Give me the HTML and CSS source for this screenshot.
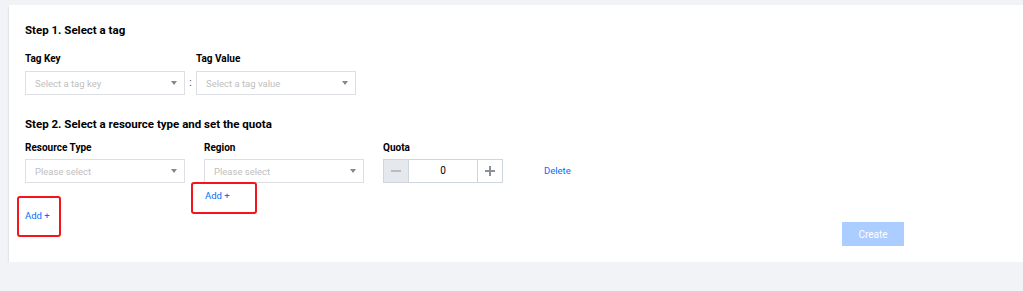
FILE: index.html
```html
<!DOCTYPE html>
<html lang="en">
<head>
    <meta charset="UTF-8">
    <title>Tag quota</title>
    <link rel="stylesheet" href="styles.css">
</head>
<body>
    <div class="card">
        <h3 class="step-title">Step 1. Select a tag</h3>
        <div class="row">
            <div class="field">
                <div class="label">Tag Key</div>
                <div class="select"><span>Select a tag key</span><i class="arrow"></i></div>
            </div>
            <div class="colon">:</div>
            <div class="field">
                <div class="label">Tag Value</div>
                <div class="select"><span>Select a tag value</span><i class="arrow"></i></div>
            </div>
        </div>

        <h3 class="step-title second">Step 2. Select a resource type and set the quota</h3>
        <div class="row quota-row">
            <div class="field">
                <div class="label">Resource Type</div>
                <div class="select"><span>Please select</span><i class="arrow"></i></div>
            </div>
            <div class="field">
                <div class="label">Region</div>
                <div class="select"><span>Please select</span><i class="arrow"></i></div>
                <a class="link add-region">Add +</a>
            </div>
            <div class="field">
                <div class="label">Quota</div>
                <div class="stepper">
                    <span class="step-btn disabled"><i class="minus"></i></span>
                    <span class="step-value">0</span>
                    <span class="step-btn"><i class="plus"></i></span>
                </div>
            </div>
            <a class="link delete">Delete</a>
        </div>

        <div class="actions">
            <a class="link add-main">Add +</a>
            <button class="btn-create" disabled>Create</button>
        </div>

        <div class="mark mark-region"></div>
        <div class="mark mark-main"></div>
    </div>
</body>
</html>
```

FILE: styles.css
```css
body {
    margin: 0;
    background: #f2f3f7;
    font-family: Roboto, 'Liberation Sans', Arial, sans-serif;
    font-size: 10px;
    color: #000;
}
.card {
    position: relative;
    margin: 5px 0 0 9px;
    height: 226px;
    padding: 16px 16px 15px;
    background: #fff;
    box-shadow: 0 2px 2px rgba(0,0,0,0.18);
}
.step-title {
    margin: 0;
    font-size: 11.5px;
    font-weight: 700;
    line-height: 18px;
}
.step-title.second {
    margin-top: 20px;
}
.row {
    display: flex;
    align-items: flex-start;
    margin-top: 13px;
}
.quota-row {
    margin-top: 8px;
}
.field {
    width: 160px;
}
.label {
    font-size: 10px;
    font-weight: 700;
    line-height: 14px;
    margin-bottom: 5px;
}
.quota-row .label {
    margin-bottom: 4px;
}
.select {
    position: relative;
    height: 24px;
    box-sizing: border-box;
    border: 1px solid #dcdfe4;
    padding: 0 9px;
    display: flex;
    align-items: center;
    color: #c0c0c0;
    font-size: 9.5px;
}
.select span {
    flex: 1;
}
.arrow {
    width: 0;
    height: 0;
    border-left: 3px solid transparent;
    border-right: 3px solid transparent;
    border-top: 4px solid #888;
    margin-right: -2px;
}
.colon {
    width: 11px;
    text-align: center;
    margin-top: 19px;
    line-height: 24px;
    color: #444;
}
.quota-row .field + .field {
    margin-left: 19px;
}
.quota-row .field:nth-child(3) {
    width: 120px;
}
.link {
    color: #006eff;
    font-size: 9.5px;
    cursor: pointer;
}
.add-region {
    display: block;
    margin-top: 6px;
    padding-left: 1px;
    line-height: 14px;
}
.delete {
    margin: 18px 0 0 41px;
    line-height: 24px;
}
.stepper {
    display: flex;
    height: 24px;
    box-sizing: border-box;
    border: 1px solid #cfd5de;
}
.step-btn {
    width: 24px;
    display: flex;
    align-items: center;
    justify-content: center;
    background: #fff;
}
.step-btn.disabled {
    background: #e5e8ed;
}
.step-value {
    flex: 1;
    text-align: center;
    line-height: 22px;
    border-left: 1px solid #cfd5de;
    border-right: 1px solid #cfd5de;
}
.minus, .plus {
    position: relative;
    width: 10px;
    height: 1.5px;
    background: #b8bec8;
}
.plus {
    background: #8a8f99;
}
.plus::after {
    content: "";
    position: absolute;
    left: 4.25px;
    top: -4.25px;
    width: 1.5px;
    height: 10px;
    background: #8a8f99;
}
.actions {
    display: flex;
    justify-content: space-between;
    align-items: flex-start;
    width: 879px;
    margin-top: 6px;
}
.add-main {
    line-height: 14px;
}
.btn-create {
    margin-top: 13px;
    width: 62px;
    height: 24px;
    border: none;
    background: #abcdff;
    color: #fff;
    font-family: inherit;
    font-size: 10px;
}
.mark {
    position: absolute;
    border: 2px solid #f5141c;
    border-radius: 3px;
    box-sizing: border-box;
}
.mark-region {
    left: 182px;
    top: 177px;
    width: 66px;
    height: 32px;
}
.mark-main {
    left: 8px;
    top: 191px;
    width: 44px;
    height: 41px;
}
```
